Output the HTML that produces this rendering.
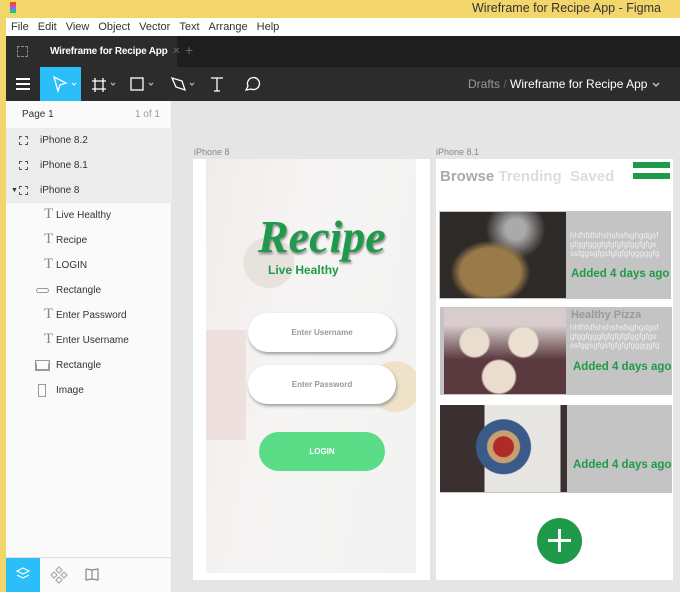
<!DOCTYPE html>
<html><head><style>
*{margin:0;padding:0;box-sizing:border-box}
body{width:680px;height:592px;overflow:hidden;background:#e5e5e5;font-family:"Liberation Sans",sans-serif;position:relative}
.a{position:absolute}
.menu span{margin-right:9px}
.row{position:absolute;left:6px;width:166px;height:25px;font-size:10px;color:#333;line-height:25px}
.t{position:absolute;left:38px;font-family:"Liberation Serif",serif;font-size:15px;color:#888;top:-1px}
</style></head><body>
<div class="a" style="left:0;top:0;width:680px;height:18px;background:#f2d66b"></div>
<div class="a" style="left:0;top:0;width:6px;height:592px;background:#f2d66b"></div>
<div class="a" style="left:10px;top:2px;width:6px;height:11px;background:linear-gradient(#f24e1e 33%,#a259ff 33% 66%,#0acf83 66%)"></div>
<div class="a" style="left:472px;top:1px;font-size:12.5px;color:#333">Wireframe for Recipe App - Figma</div>
<div class="a menu" style="left:6px;top:18px;width:674px;height:18px;background:#fff;font-size:11px;color:#333;padding:3px 0 0 5px"><span>File</span><span>Edit</span><span>View</span><span>Object</span><span>Vector</span><span>Text</span><span>Arrange</span><span>Help</span></div>
<div class="a" style="left:6px;top:36px;width:674px;height:31px;background:#1e1e1e"></div>
<div class="a" style="left:6px;top:36px;width:35px;height:31px;background:#2c2c2c"></div>
<div class="a" style="left:17px;top:46px;width:11px;height:11px;border:1px dashed #888"></div>
<div class="a" style="left:41px;top:36px;width:136px;height:31px;background:#2c2c2c;color:#fff;font-size:10px;font-weight:bold;padding:10px 0 0 9px;white-space:nowrap;letter-spacing:-0.2px">Wireframe for Recipe App <span style="color:#666;font-weight:normal;margin-left:2px">✕</span></div>
<div class="a" style="left:185px;top:42px;color:#666;font-size:14px">+</div>
<div class="a" style="left:6px;top:67px;width:674px;height:34px;background:#2c2c2c"></div>
<div class="a" style="left:16px;top:78px;width:14px;height:12px;border-top:2px solid #fff;border-bottom:2px solid #fff"><div style="margin-top:3px;height:2px;background:#fff"></div></div>
<div class="a" style="left:40px;top:67px;width:41px;height:34px;background:#2bbef9"></div>
<svg class="a" style="left:40px;top:67px" width="640" height="34" fill="none" stroke="#fff" stroke-width="1.3">
<path d="M14 10l12 6-6 2-2 6z"/><path d="M32 16l2 2 2-2" stroke-width="1"/>
<path d="M55 11v14M63 11v14M52 14h14M52 22h14"/><path d="M71 16l2 2 2-2" stroke="#aaa"/>
<rect x="91" y="11" width="12" height="12"/><path d="M109 16l2 2 2-2" stroke="#aaa"/>
<path d="M132 11l10 3 3 9-9-3z"/><path d="M150 16l2 2 2-2" stroke="#aaa"/>
<path d="M171 11h12M177 11v13M174 24h6"/>
<path d="M206 23l2-4a6 6 0 1 1 3 3z"/>
<path d="M613 16l3 3 3-3" stroke="#ccc"/>
</svg>
<div class="a" style="left:468px;top:77px;font-size:12px;color:#999">Drafts <span style="color:#666">/</span> <span style="color:#fff">Wireframe for Recipe App</span></div>
<div class="a" style="left:6px;top:101px;width:166px;height:491px;background:#fafafa;border-right:1px solid #e0e0e0"></div>
<div class="row" style="top:102px;padding-left:16px">Page 1<span style="position:absolute;right:12px;color:#999">1 of 1</span></div>
<div class="a" style="left:6px;top:128px;width:166px;height:75px;background:#ececec"></div>
<div class="row" style="top:128px;padding-left:34px">iPhone 8.2<div class="a" style="left:13px;top:8px;width:9px;height:9px;border:1px dashed #555"></div></div>
<div class="row" style="top:153px;padding-left:34px">iPhone 8.1<div class="a" style="left:13px;top:8px;width:9px;height:9px;border:1px dashed #555"></div></div>
<div class="row" style="top:178px;padding-left:34px"><span class="a" style="left:5px;font-size:7px">▼</span>iPhone 8<div class="a" style="left:13px;top:8px;width:9px;height:9px;border:1px dashed #555"></div></div>
<div class="row" style="top:203px;padding-left:50px"><span class="t">T</span>Live Healthy</div>
<div class="row" style="top:228px;padding-left:50px"><span class="t">T</span>Recipe</div>
<div class="row" style="top:253px;padding-left:50px"><span class="t">T</span>LOGIN</div>
<div class="row" style="top:278px;padding-left:50px"><div class="a" style="left:30px;top:10px;width:13px;height:5px;border:1px solid #999;border-radius:3px"></div>Rectangle</div>
<div class="row" style="top:303px;padding-left:50px"><span class="t">T</span>Enter Password</div>
<div class="row" style="top:328px;padding-left:50px"><span class="t">T</span>Enter Username</div>
<div class="row" style="top:353px;padding-left:50px"><div class="a" style="left:30px;top:8px;width:13px;height:9px;border:1px solid #999;border-top:4px solid #fafafa;outline:1px solid #999"></div>Rectangle</div>
<div class="row" style="top:378px;padding-left:50px"><div class="a" style="left:32px;top:6px;width:8px;height:13px;border:1px solid #999"></div>Image</div>
<div class="a" style="left:6px;top:557px;width:166px;height:1px;background:#e0e0e0"></div>
<div class="a" style="left:6px;top:558px;width:34px;height:34px;background:#2bbef9"></div>
<svg class="a" style="left:6px;top:558px" width="166" height="34" fill="none" stroke-width="1.2"><path d="M17 10l6 3-6 3-6-3z M11 17l6 3 6-3" stroke="#fff"/><path d="M53 9l3 3-3 3-3-3zM48 14l3 3-3 3-3-3zM58 14l3 3-3 3-3-3zM53 19l3 3-3 3-3-3z" stroke="#aaa"/><path d="M80 11v11l6-1 6 1V11l-6 1-6-1M86 12v9" stroke="#888"/></svg>
<div class="a" style="left:194px;top:147px;font-size:9px;color:#888">iPhone 8</div>
<div class="a" style="left:436px;top:147px;font-size:9px;color:#888">iPhone 8.1</div>
<div class="a" style="left:193px;top:159px;width:237px;height:421px;background:#fff"></div>
<div class="a" style="left:206px;top:159px;width:210px;height:414px;background:radial-gradient(circle at 30% 25%,#e8e2dc 0 25px,transparent 26px),radial-gradient(circle at 90% 55%,#efe2c8 0 25px,transparent 26px),linear-gradient(100deg,#f0ecea 0%,#f6f5f4 40%,#f2f2f2 100%)"></div>
<div class="a" style="left:206px;top:330px;width:40px;height:110px;background:#ecd9d9;opacity:.7"></div>
<div class="a" style="left:258px;top:210px;font-family:'Liberation Serif',serif;font-style:italic;font-weight:bold;font-size:46px;color:#1f9a4a;text-shadow:1px 2px 2px #888">Recipe</div>
<div class="a" style="left:268px;top:263px;font-size:12px;font-weight:bold;color:#1f9a4a">Live Healthy</div>
<div class="a" style="left:248px;top:313px;width:148px;height:39px;background:#fff;border-radius:20px;box-shadow:1px 2px 3px #999;font-size:8px;color:#999;text-align:center;line-height:39px;font-weight:bold">Enter Username</div>
<div class="a" style="left:248px;top:365px;width:148px;height:39px;background:#fff;border-radius:20px;box-shadow:1px 2px 3px #999;font-size:8px;color:#999;text-align:center;line-height:39px;font-weight:bold">Enter Password</div>
<div class="a" style="left:259px;top:432px;width:126px;height:39px;background:#5bdc86;border-radius:20px;font-size:8px;color:#fff;text-align:center;line-height:39px;font-weight:bold">LOGIN</div>
<div class="a" style="left:436px;top:159px;width:237px;height:421px;background:#fff"></div>
<div class="a" style="left:440px;top:168px;font-size:15px;font-weight:bold;color:#c2c2c2"><span style="color:#aaa">Browse</span> <span style="color:#ddd">Trending</span>&nbsp; <span style="color:#ddd">Saved</span></div>
<div class="a" style="left:633px;top:162px;width:37px;height:6px;background:#1f9a4a"></div>
<div class="a" style="left:633px;top:173px;width:37px;height:6px;background:#1f9a4a"></div>
<div class="a" style="left:439px;top:211px;width:232px;height:88px;background:#c4c4c4"></div>
<div class="a" style="left:440px;top:212px;width:126px;height:86px;background:radial-gradient(ellipse at 40% 70%,#9b7a4a 0 30px,transparent 40px),radial-gradient(circle at 60% 20%,#aaa 0 10px,transparent 30px),#2e2a28"></div>
<div class="a" style="left:440px;top:307px;width:232px;height:88px;background:#c4c4c4"></div>
<div class="a" style="left:444px;top:308px;width:122px;height:86px;background:radial-gradient(circle at 25% 40%,#e9ddd0 0 14px,transparent 16px),radial-gradient(circle at 65% 40%,#ece0d3 0 14px,transparent 16px),radial-gradient(circle at 45% 80%,#eadccf 0 16px,transparent 18px),linear-gradient(#d8cccc 0 20%,#5a3a3e 60%)"></div>
<div class="a" style="left:440px;top:405px;width:232px;height:88px;background:#c4c4c4"></div>
<div class="a" style="left:440px;top:405px;width:127px;height:87px;background:radial-gradient(circle at 50% 48%,#b02a2a 0 10px,#c8a070 11px 16px,#3a5a8a 17px 27px,transparent 28px),linear-gradient(90deg,#3a3030 0 35%,#e8e6e2 35% 95%,#3a3030 95%)"></div>
<div class="a" style="left:570px;top:231px;width:100px;font-size:8px;color:#eee;line-height:9px;overflow:hidden;white-space:nowrap">hhfhfdfshshshsfsghgdgsf<br>gfggfgggfgfgfgfgfggfgfgs<br>ssfggsgfgsfgfgfgfgggggfg</div>
<div class="a" style="left:571px;top:268px;font-size:11.5px;font-weight:bold;color:#1f9a4a">Added 4 days ago</div>
<div class="a" style="left:571px;top:309px;font-size:11px;font-weight:bold;color:#999">Healthy Pizza</div>
<div class="a" style="left:570px;top:323px;width:100px;font-size:8px;color:#eee;line-height:9px;overflow:hidden;white-space:nowrap">hhfhfdfshshshsfsghgdgsf<br>gfggfgggfgfgfgfgfggfgfgs<br>ssfggsgfgsfgfgfgfgggggfg</div>
<div class="a" style="left:573px;top:361px;font-size:11.5px;font-weight:bold;color:#1f9a4a">Added 4 days ago</div>
<div class="a" style="left:573px;top:459px;font-size:11.5px;font-weight:bold;color:#1f9a4a">Added 4 days ago</div>
<div class="a" style="left:537px;top:518px;width:45px;height:46px;border-radius:50%;background:#1f9a4a"></div>
<div class="a" style="left:548px;top:539px;width:23px;height:3px;background:#fff"></div>
<div class="a" style="left:558px;top:529px;width:3px;height:23px;background:#fff"></div>
</body></html>
